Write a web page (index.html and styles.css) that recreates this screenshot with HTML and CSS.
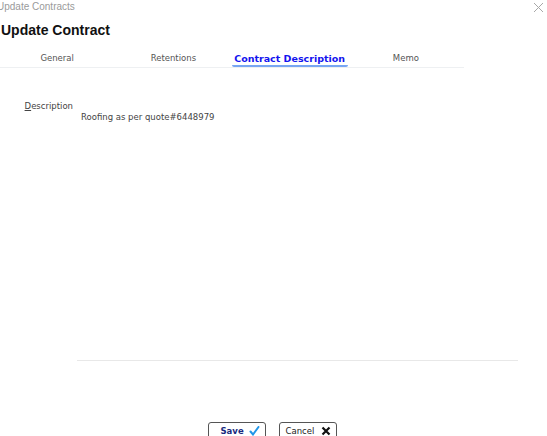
FILE: index.html
```html
<!DOCTYPE html>
<html lang="en">
<head>
    <meta charset="UTF-8">
    <meta name="viewport" content="width=device-width, initial-scale=1.0">
    <title>Update Contracts</title>
    <link rel="stylesheet" href="styles.css">
</head>
<body>
    <div class="dialog">
        <div class="dialog-bar">
            <span class="dialog-caption">Update Contracts</span>
            <button class="close-btn" type="button" aria-label="Close">
                <svg width="11" height="11" viewBox="0 0 11 11">
                    <path d="M1 1 L10 10 M10 1 L1 10" stroke="#a8a8a8" stroke-width="1" fill="none"/>
                </svg>
            </button>
        </div>
        <h1 class="dialog-title">Update Contract</h1>

        <div class="tabs">
            <div class="tab">General</div>
            <div class="tab">Retentions</div>
            <div class="tab active">Contract Description</div>
            <div class="tab">Memo</div>
        </div>

        <div class="form-row">
            <label class="field-label" for="description"><u>D</u>escription</label>
            <div class="field-value" id="description">Roofing as per quote#6448979</div>
        </div>

        <div class="actions">
            <button type="submit" class="btn btn-save">
                Save
                <svg width="11" height="10" viewBox="0 0 11 10">
                    <path d="M1.5 5.5 L4 8.5 L9.5 1" stroke="#2196e8" stroke-width="2" fill="none" stroke-linecap="round"/>
                </svg>
            </button>
            <button type="button" class="btn btn-cancel">
                Cancel
                <svg width="10" height="10" viewBox="0 0 10 10">
                    <path d="M1.5 1.5 L8.5 8.5 M8.5 1.5 L1.5 8.5" stroke="#111" stroke-width="2.2" fill="none"/>
                </svg>
            </button>
        </div>
    </div>
</body>
</html>
```

FILE: styles.css
```css
body {
    margin: 0;
    background-color: #fff;
    font-family: "DejaVu Sans", Verdana, sans-serif;
    color: #333;
}
.dialog {
    width: 547px;
    height: 436px;
    overflow: hidden;
}
.dialog-bar {
    display: flex;
    justify-content: space-between;
    align-items: flex-start;
    height: 16px;
}
.dialog-caption {
    margin-left: -3px;
    margin-top: 1px;
    font-family: "Liberation Sans", Arial, sans-serif;
    font-size: 10px;
    color: #9a9a9a;
}
.close-btn {
    margin: 2px 3px 0 0;
    padding: 0;
    border: none;
    background: none;
    line-height: 0;
    cursor: pointer;
}
.dialog-title {
    margin: 4px 0 0 1px;
    font-family: "Liberation Sans", Arial, sans-serif;
    font-size: 14px;
    font-weight: bold;
    color: #111;
    line-height: 20px;
}
.tabs {
    display: grid;
    grid-template-columns: repeat(4, 1fr);
    width: 465px;
    margin: 8px 0 0 -1px;
    border-bottom: 1px solid #eef0f2;
}
.tab {
    text-align: center;
    font-size: 8.5px;
    color: #555;
    height: 19px;
    padding-top: 3px;
    line-height: 15px;
    box-sizing: border-box;
}
.tab.active {
    font-weight: bold;
    font-size: 9.5px;
    color: #1414ee;
    border-bottom: 2px solid #78a6f2;
    border-radius: 0 0 2px 2px;
    margin: 0 0 -1px;
}
.form-row {
    display: grid;
    grid-template-columns: 77px 441px;
    margin-top: 32px;
}
.field-label {
    text-align: right;
    padding-right: 4px;
    font-size: 8.5px;
    color: #444;
    line-height: 12px;
}
.field-value {
    height: 249px;
    padding: 11px 0 0 4px;
    border-bottom: 1px solid #e8e8e8;
    font-size: 8.5px;
    color: #444;
    line-height: 12px;
}
.actions {
    display: flex;
    justify-content: center;
    gap: 13px;
    margin-top: 61px;
    padding-right: 3px;
}
.btn {
    display: flex;
    align-items: center;
    justify-content: space-between;
    width: 58px;
    height: 24px;
    padding: 0 5px 6px 12px;
    background: #fff;
    border: 1px solid #555;
    border-radius: 3px;
    box-sizing: border-box;
    font-family: "DejaVu Sans", Verdana, sans-serif;
    font-size: 8.5px;
    cursor: pointer;
}
.btn-save {
    font-weight: bold;
    color: #1a2a80;
}
.btn-cancel {
    padding-left: 6px;
    color: #222;
}
```
